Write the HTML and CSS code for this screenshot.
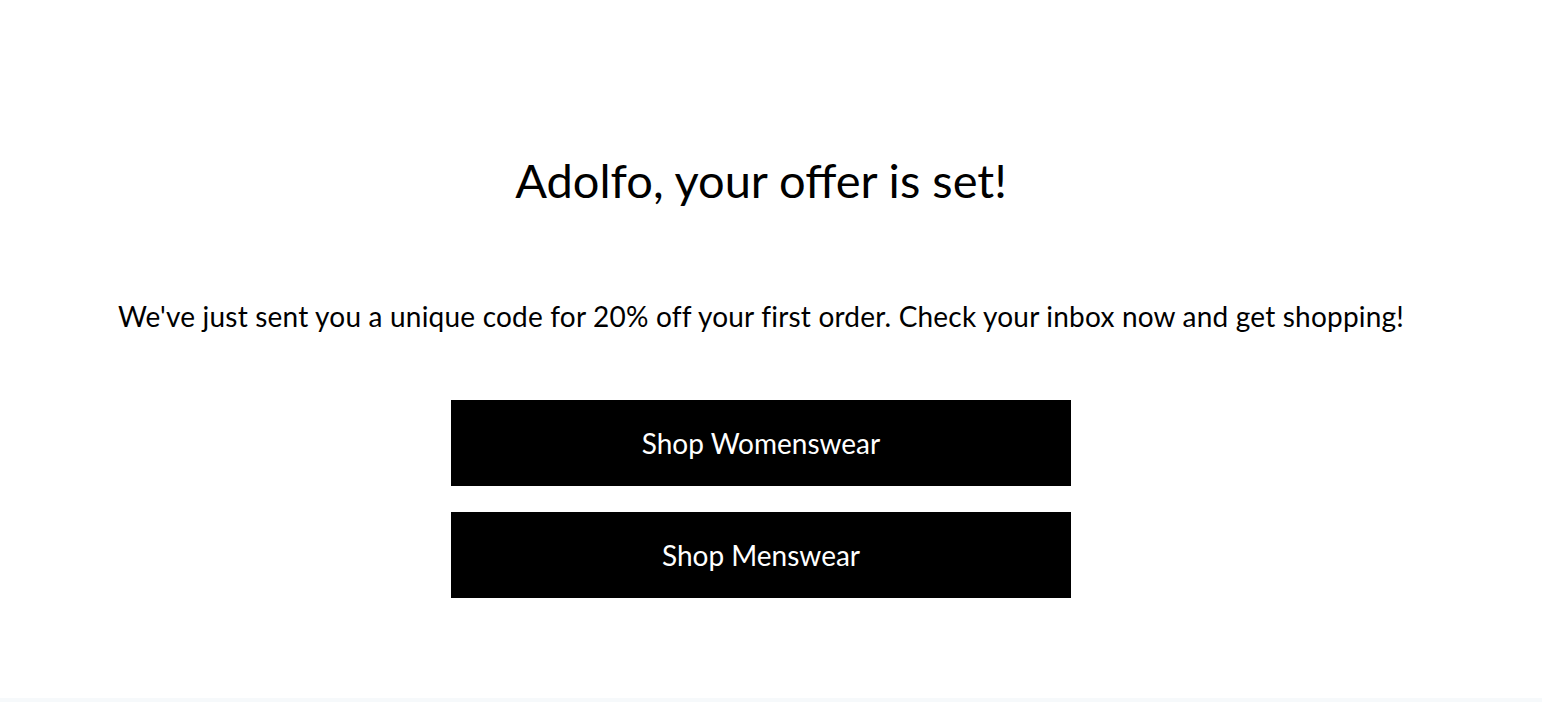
FILE: index.html
```html
<!DOCTYPE html>
<html lang="en">
<head>
<meta charset="utf-8">
<title>Offer set</title>
<link rel="stylesheet" href="styles.css">
</head>
<body>
<main class="page">
  <section class="confirm">
    <h1 class="confirm-title">Adolfo, your offer is set!</h1>
    <p class="confirm-text">We've just sent you a unique code for 20% off your first order. Check your inbox now and get shopping!</p>
    <div class="actions">
      <a class="btn" href="#">Shop Womenswear</a>
      <a class="btn" href="#">Shop Menswear</a>
    </div>
  </section>
</main>
<footer class="footer-strip"></footer>
</body>
</html>
```

FILE: styles.css
```css
html, body {
  margin: 0;
  padding: 0;
  background: #fff;
}
body {
  font-family: "Lato", "Noto Sans", sans-serif;
  color: #000;
  height: 702px;
  display: flex;
  flex-direction: column;
}
.page {
  flex: 1;
  padding-right: 20px;
}
.confirm {
  display: flex;
  flex-direction: column;
  align-items: center;
  padding-top: 150px;
}
.confirm-title {
  margin: 0;
  font-weight: 400;
  font-size: 47px;
  line-height: 60px;
}
.confirm-text {
  margin: 88px 0 0;
  font-size: 28px;
  letter-spacing: 0.2px;
  line-height: 36px;
}
.actions {
  margin-top: 66px;
  display: flex;
  flex-direction: column;
  gap: 26px;
}
.btn {
  display: flex;
  align-items: center;
  justify-content: center;
  width: 620px;
  height: 86px;
  background: #000;
  color: #fff;
  text-decoration: none;
  font-size: 28px;
}
.footer-strip {
  height: 4px;
  background: #f6f9fb;
}
```
